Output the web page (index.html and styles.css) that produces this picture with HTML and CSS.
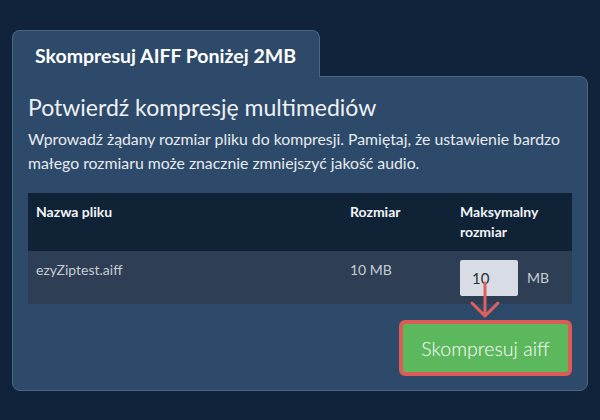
FILE: index.html
```html
<!DOCTYPE html>
<html lang="pl">
<head>
<meta charset="utf-8">
<title>Skompresuj AIFF</title>
<link rel="stylesheet" href="styles.css">
</head>
<body>
<div class="page">
  <div class="tab">Skompresuj AIFF Poniżej 2MB</div>
  <div class="panel">
    <h1 class="title">Potwierdź kompresję multimediów</h1>
    <p class="lead">Wprowadź żądany rozmiar pliku do kompresji. Pamiętaj, że ustawienie bardzo małego rozmiaru może znacznie zmniejszyć jakość audio.</p>
    <table class="files">
      <thead>
        <tr>
          <th class="c-name">Nazwa pliku</th>
          <th class="c-size">Rozmiar</th>
          <th class="c-max">Maksymalny rozmiar</th>
        </tr>
      </thead>
      <tbody>
        <tr>
          <td>ezyZiptest.aiff</td>
          <td>10 MB</td>
          <td><div class="maxbox"><input class="maxinput" type="text" value="10"><span class="unit">MB</span></div></td>
        </tr>
      </tbody>
    </table>
    <div class="actions"><button class="btn" type="button">Skompresuj aiff</button></div>
    <svg class="arrow" width="34" height="40" viewBox="0 0 34 40" aria-hidden="true">
      <path d="M17 3 V36 M4 23 L17 36 L30 23" fill="none" stroke="#e0615b" stroke-width="3" stroke-linecap="round" stroke-linejoin="round"/>
    </svg>
  </div>
</div>
</body>
</html>
```
FILE: styles.css
```css
html, body {
  margin: 0;
  background: #11233a;
}
body {
  font-family: Lato, "Noto Sans", sans-serif;
  color: #eef1f5;
}
.page {
  padding: 30px 12px 0 12px;
}
.tab {
  position: relative;
  z-index: 1;
  box-sizing: border-box;
  width: 308px;
  height: 47px;
  margin-bottom: -1px;
  padding: 4px 0 0 22px;
  line-height: 41px;
  font-size: 19.5px;
  font-weight: 700;
  color: #ffffff;
  background: #2d4a6a;
  border: 1px solid #4b6585;
  border-bottom: none;
  border-radius: 8px 8px 0 0;
}
.panel {
  position: relative;
  padding: 16px 15px 14px 15px;
  background: #2d4a6a;
  border: 1px solid #4b6585;
  border-radius: 0 8px 8px 8px;
}
.title {
  margin: 0 0 6px 0;
  font-size: 23px;
  line-height: 28px;
  font-weight: 400;
  color: #eef1f5;
}
.lead {
  margin: 0 0 18px 0;
  font-size: 15.8px;
  line-height: 24px;
  color: #e6eaef;
}
.files {
  width: 100%;
  border-collapse: collapse;
  font-size: 14px;
  line-height: 20px;
}
.files th {
  text-align: left;
  vertical-align: top;
  font-weight: 700;
  color: #f2f4f7;
  background: #0f2236;
  padding: 9px 8px;
}
.c-name { width: 298px; }
.c-size { width: 94px; }
.c-max { width: 104px; }
.files td {
  vertical-align: top;
  padding: 9px 8px 8px 8px;
  background: #2e3f55;
  color: #c6ccd4;
}
.maxbox {
  display: flex;
  align-items: center;
  gap: 9px;
}
.maxinput {
  box-sizing: border-box;
  width: 58px;
  height: 36px;
  margin: 0;
  padding: 0 0 0 12px;
  border: none;
  border-radius: 2px;
  background: #d8dde5;
  font-family: Lato, "Noto Sans", sans-serif;
  font-size: 15px;
  color: #2b2f36;
}
.unit {
  font-size: 14px;
  color: #c6ccd4;
}
.actions {
  display: flex;
  justify-content: flex-end;
  margin-top: 16px;
}
.btn {
  box-sizing: border-box;
  width: 173px;
  height: 56px;
  margin: 0;
  padding: 0;
  border: 4px solid #dc5b57;
  border-radius: 6px;
  background: #5cb85c;
  color: #ffffff;
  font-family: Lato, "Noto Sans", sans-serif;
  font-size: 19.6px;
  font-weight: 300;
}
.arrow {
  position: absolute;
  left: 455px;
  top: 203px;
}
```
